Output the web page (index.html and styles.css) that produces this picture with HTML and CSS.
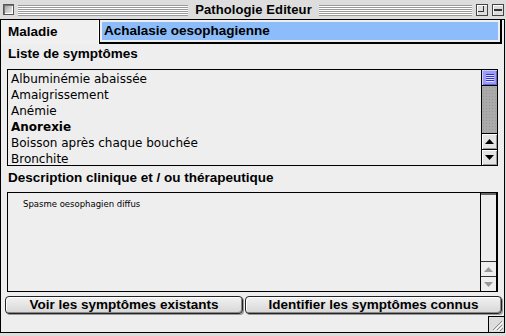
FILE: index.html
```html
<!DOCTYPE html>
<html lang="fr">
<head>
<meta charset="utf-8">
<title>Pathologie Editeur</title>
<link rel="stylesheet" href="styles.css">
</head>
<body>
<div class="window">
  <div class="titlebar">
    <div class="tb-side tb-left">
      <div class="closebox"></div>
      <div class="stripes"></div>
    </div>
    <div class="title">Pathologie Editeur</div>
    <div class="tb-side tb-right">
      <div class="stripes"></div>
      <div class="zoombox"><span></span></div>
      <div class="collapsebox"><span></span></div>
    </div>
  </div>
  <div class="content">
    <div class="maladie-row">
      <div class="maladie-label">Maladie</div>
      <div class="field"><div class="sel">Achalasie oesophagienne</div></div>
    </div>
    <div class="section-label first">Liste de symptômes</div>
    <div class="listbox">
      <ul class="items">
        <li>Albuminémie abaissée</li>
        <li>Amaigrissement</li>
        <li>Anémie</li>
        <li class="bold">Anorexie</li>
        <li>Boisson après chaque bouchée</li>
        <li>Bronchite</li>
      </ul>
      <div class="scrollbar">
        <div class="thumb"><i></i><i></i><i></i><i></i></div>
        <div class="track"></div>
        <div class="arrow up"><svg width="9" height="5" viewBox="0 0 9 5"><path d="M4.5 0 L9 5 L0 5 Z" fill="#000"/></svg></div>
        <div class="arrow down"><svg width="9" height="5" viewBox="0 0 9 5"><path d="M0 0 L9 0 L4.5 5 Z" fill="#000"/></svg></div>
      </div>
    </div>
    <div class="section-label second">Description clinique et / ou thérapeutique</div>
    <div class="textbox">
      <div class="text">Spasme oesophagien diffus</div>
      <div class="scrollbar disabled">
        <div class="track"></div>
        <div class="arrow up"><svg width="9" height="5" viewBox="0 0 9 5"><path d="M4.5 0 L9 5 L0 5 Z" fill="#999"/></svg></div>
        <div class="arrow down"><svg width="9" height="5" viewBox="0 0 9 5"><path d="M0 0 L9 0 L4.5 5 Z" fill="#999"/></svg></div>
      </div>
    </div>
    <div class="buttons">
      <div class="btn left">Voir les symptômes existants</div>
      <div class="btn right">Identifier les symptômes connus</div>
    </div>
    <div class="bottom">
      <div class="growbox"><svg width="15" height="15" viewBox="0 0 15 15"><path d="M4 13 L13 4 M8 13 L13 8 M11 14 L14 11" stroke="#888" stroke-width="1"/><path d="M5 14 L14 5 M9 14 L14 9" stroke="#fff" stroke-width="1"/></svg></div>
    </div>
  </div>
</div>
</body>
</html>
```
FILE: styles.css
```css
* { box-sizing: border-box; }
html, body { margin: 0; padding: 0; }
body { width: 506px; height: 336px; overflow: hidden; background: #dddddd; font-family: "Liberation Sans", Arial, sans-serif; }

.window { width: 506px; height: 336px; background: #dddddd; display: flex; flex-direction: column; }

.titlebar { height: 19px; display: grid; grid-template-columns: 1fr auto 1fr; align-items: center; padding: 0 2px 0 3px; background: #dddddd; }
.tb-side { display: flex; align-items: center; }
.closebox { width: 11px; height: 11px; border: 1px solid #555; background: linear-gradient(135deg, #999 0%, #ccc 50%, #eee 100%); box-shadow: inset 1px 1px #777, inset -1px -1px #fff; margin-right: 4px; }
.stripes { flex: 1; height: 11px; background: repeating-linear-gradient(to bottom, #999 0 1px, #fff 1px 2px); margin-top: 1px; }
.title { font-weight: bold; font-size: 13px; padding: 0 7px; color: #000; letter-spacing: 0.1px; }
.zoombox, .collapsebox { width: 12px; height: 12px; border: 1px solid #444; background: #ddd; margin-left: 4px; position: relative; box-shadow: inset 1px 1px #fff; }
.zoombox span { position: absolute; left: 1px; top: 1px; width: 6px; height: 6px; border: 1px solid #333; border-top: none; border-left: none; }
.collapsebox span { position: absolute; left: 1px; right: 1px; top: 4px; height: 2px; border-top: 1px solid #333; border-bottom: 1px solid #333; }

.content { flex: 1; background: #eeeeee; border: 1px solid #000; margin: 0 1px 3px 0; display: flex; flex-direction: column; }

.maladie-row { height: 24px; display: flex; }
.maladie-label { width: 98px; padding-left: 7px; font-weight: bold; font-size: 13.5px; line-height: 23px; border-right: 1px solid #fff; background: #f0f0f0; }
.field { flex: 1; border: 1px solid #000; border-top: none; margin-right: 2px; padding: 2px 3px 3px 2px; background: #eeeeee; box-shadow: inset -1px -1px #000; }
.sel { height: 100%; background: #8cbdfa; font-weight: bold; font-size: 13.5px; line-height: 17px; padding-left: 2px; color: #000; }

.section-label { padding-left: 7px; font-weight: bold; font-size: 13.5px; line-height: 18px; }
.section-label.first { height: 25px; padding-top: 1px; }
.section-label.second { height: 26px; padding-top: 3px; }

.listbox { height: 97px; margin: 0 6px 0 6px; border: 1px solid #000; background: #eeeeee; display: flex; }
.items { list-style: none; margin: 0; padding: 1px 0 0 3px; flex: 1; font-family: "DejaVu Sans", sans-serif; font-size: 12px; line-height: 16px; color: #000; }
.items li.bold { font-weight: bold; }

.scrollbar { width: 16px; border-left: 1px solid #000; display: flex; flex-direction: column; background: #eee; }
.thumb { height: 16px; background: #9c9cf8; border-bottom: 1px solid #000; display: flex; flex-direction: column; justify-content: center; align-items: center; gap: 1px; box-shadow: inset 1px 1px #ccf, inset -1px -1px #66c; }
.thumb i { display: block; width: 8px; height: 1px; background: #33c; box-shadow: 0 1px #ddf; }
.track { flex: 1; background: #aaaaaa; background-image: radial-gradient(#999 0.6px, transparent 0.8px); background-size: 3px 3px; }
.arrow { height: 16px; border-top: 1px solid #000; background: #e4e4e4; display: flex; align-items: center; justify-content: center; box-shadow: inset 1px 1px #fff, inset -1px -1px #999; }

.textbox { height: 100px; margin: 0 6px 0 6px; border: 1px solid #000; border-right-width: 2px; background: #eeeeee; display: flex; }
.text { flex: 1; padding: 5px 0 0 15px; font-family: "DejaVu Sans", sans-serif; font-size: 8.5px; line-height: 12px; }
.scrollbar.disabled { background: #eeeeee; }
.scrollbar.disabled .track { background: #eeeeee; border-top: 2px solid #666; }
.scrollbar.disabled .arrow { background: #eeeeee; border-top-color: #333; box-shadow: none; height: 15px; }

.buttons { display: flex; gap: 2px; padding: 0 2px 0 4px; margin-top: 4px; height: 18px; }
.btn { height: 18px; border: 1px solid #222; border-radius: 4px; background: linear-gradient(#f2f2f2, #d6d6d6); box-shadow: inset 1px 1px #fff, inset -1px -1px #888, 1px 1px 0 #999; font-weight: bold; font-size: 13.5px; line-height: 16px; text-align: center; color: #000; }
.btn.left { width: 238px; }
.btn.right { flex: 1; }

.bottom { flex: 1; display: flex; justify-content: flex-end; align-items: flex-end; }
.growbox { width: 16px; height: 16px; border-left: 1px solid #000; border-top: 1px solid #000; background: #dddddd; }
.growbox svg { display: block; }
```
